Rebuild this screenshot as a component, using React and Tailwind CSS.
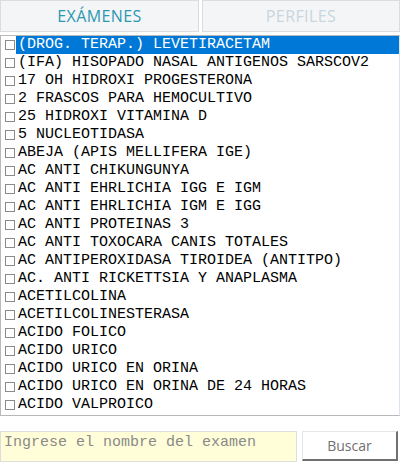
import React from "react";

const items = [
  "(DROG. TERAP.) LEVETIRACETAM",
  "(IFA) HISOPADO NASAL ANTIGENOS SARSCOV2",
  "17 OH HIDROXI PROGESTERONA",
  "2 FRASCOS PARA HEMOCULTIVO",
  "25 HIDROXI VITAMINA D",
  "5 NUCLEOTIDASA",
  "ABEJA (APIS MELLIFERA IGE)",
  "AC ANTI CHIKUNGUNYA",
  "AC ANTI EHRLICHIA IGG E IGM",
  "AC ANTI EHRLICHIA IGM E IGG",
  "AC ANTI PROTEINAS 3",
  "AC ANTI TOXOCARA CANIS TOTALES",
  "AC ANTIPEROXIDASA TIROIDEA (ANTITPO)",
  "AC. ANTI RICKETTSIA Y ANAPLASMA",
  "ACETILCOLINA",
  "ACETILCOLINESTERASA",
  "ACIDO FOLICO",
  "ACIDO URICO",
  "ACIDO URICO EN ORINA",
  "ACIDO URICO EN ORINA DE 24 HORAS",
  "ACIDO VALPROICO",
];

export default function App() {
  return (
    <div className="w-[400px] h-[462px] bg-white flex flex-col overflow-hidden">
      <div className="flex gap-[3px] h-[32px]">
        <div className="w-[199px] h-[32px] bg-[#f4f5f6] border border-[#dcdcdc] flex items-center justify-center text-[16px] text-[#2b98b2] tracking-[0.4px] font-['Open_Sans',sans-serif]">
          EXÁMENES
        </div>
        <div className="flex-1 h-[32px] bg-[#f4f5f6] border border-[#dcdcdc] flex items-center justify-center text-[16px] text-[#c7d6e1] tracking-[0.4px] font-['Open_Sans',sans-serif]">
          PERFILES
        </div>
      </div>
      <div className="mt-[3px] h-[381px] border border-[#b8b8b8] border-r-[#d9e4ee] flex flex-col font-['Liberation_Mono',monospace] text-[15px]">
        {items.map((t, i) => (
          <div key={i} className="h-[18px] flex items-center shrink-0">
            <div className="w-[15px] flex justify-center items-center shrink-0">
              <div className="w-[10px] h-[10px] border border-[#8a8a8a] bg-white ml-[2px]" />
            </div>
            <div
              className={
                i === 0
                  ? "flex-1 h-[18px] bg-[#0078d7] text-white pl-[2px] leading-[18px] whitespace-nowrap"
                  : "flex-1 h-[18px] text-black pl-[2px] leading-[18px] whitespace-nowrap"
              }
            >
              {t}
            </div>
          </div>
        ))}
      </div>
      <div className="mt-[15px] flex items-start">
        <div className="w-[297px] h-[31px] bg-[#fffed8] border border-[#dedede] pl-[3px] pt-[1px] font-['Liberation_Mono',monospace] text-[15px] text-[#8a8a8a] leading-[20px] whitespace-nowrap">
          Ingrese el nombre del examen
        </div>
        <div className="ml-[5px] w-[96px] h-[30px] bg-white border-t border-l border-t-[#e6e6e6] border-l-[#e6e6e6] border-b-2 border-r-2 border-b-[#707070] border-r-[#707070] flex items-center justify-center text-[14px] text-[#707070] font-['Open_Sans',sans-serif]">
          Buscar
        </div>
      </div>
    </div>
  );
}
